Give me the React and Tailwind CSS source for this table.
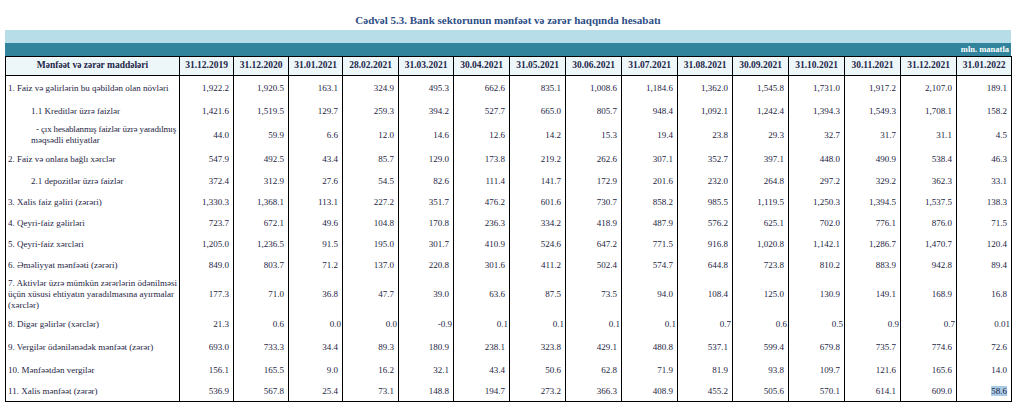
const dates = [
  '31.12.2019', '31.12.2020', '31.01.2021', '28.02.2021', '31.03.2021', '30.04.2021', '31.05.2021',
  '30.06.2021', '31.07.2021', '31.08.2021', '30.09.2021', '31.10.2021', '30.11.2021', '31.12.2021', '31.01.2022',
];

const colW = [
  'w-[54px]', 'w-[55px]', 'w-[54px]', 'w-[56px]', 'w-[55px]', 'w-[56px]', 'w-[56px]', 'w-[56px]',
  'w-[56px]', 'w-[55px]', 'w-[56px]', 'w-[56px]', 'w-[56px]', 'w-[56px]', 'w-[55px]',
];

const rows = [
  { label: '1. Faiz və gəlirlərin bu qəbildən olan növləri', h: 'h-[25px]', vals: ['1,922.2', '1,920.5', '163.1', '324.9', '495.3', '662.6', '835.1', '1,008.6', '1,184.6', '1,362.0', '1,545.8', '1,731.0', '1,917.2', '2,107.0', '189.1'] },
  { label: '1.1 Kreditlər üzrə faizlər', indent: true, h: 'h-[22px]', vals: ['1,421.6', '1,519.5', '129.7', '259.3', '394.2', '527.7', '665.0', '805.7', '948.4', '1,092.1', '1,242.4', '1,394.3', '1,549.3', '1,708.1', '158.2'] },
  { label: null, sub: true, h: 'h-[25px]', vals: ['44.0', '59.9', '6.6', '12.0', '14.6', '12.6', '14.2', '15.3', '19.4', '23.8', '29.3', '32.7', '31.7', '31.1', '4.5'] },
  { label: '2. Faiz və onlara bağlı xərclər', h: 'h-[23px]', vals: ['547.9', '492.5', '43.4', '85.7', '129.0', '173.8', '219.2', '262.6', '307.1', '352.7', '397.1', '448.0', '490.9', '538.4', '46.3'] },
  { label: '2.1 depozitlər üzrə faizlər', indent: true, h: 'h-[21px]', vals: ['372.4', '312.9', '27.6', '54.5', '82.6', '111.4', '141.7', '172.9', '201.6', '232.0', '264.8', '297.2', '329.2', '362.3', '33.1'] },
  { label: '3. Xalis faiz gəliri (zərəri)', h: 'h-[21px]', vals: ['1,330.3', '1,368.1', '113.1', '227.2', '351.7', '476.2', '601.6', '730.7', '858.2', '985.5', '1,119.5', '1,250.3', '1,394.5', '1,537.5', '138.3'] },
  { label: '4. Qeyri-faiz gəlirləri', h: 'h-[21px]', vals: ['723.7', '672.1', '49.6', '104.8', '170.8', '236.3', '334.2', '418.9', '487.9', '576.2', '625.1', '702.0', '776.1', '876.0', '71.5'] },
  { label: '5. Qeyri-faiz xərcləri', h: 'h-[21px]', vals: ['1,205.0', '1,236.5', '91.5', '195.0', '301.7', '410.9', '524.6', '647.2', '771.5', '916.8', '1,020.8', '1,142.1', '1,286.7', '1,470.7', '120.4'] },
  { label: '6. Əməliyyat mənfəəti (zərəri)', h: 'h-[21px]', vals: ['849.0', '803.7', '71.2', '137.0', '220.8', '301.6', '411.2', '502.4', '574.7', '644.8', '723.8', '810.2', '883.9', '942.8', '89.4'] },
  { label: '7. Aktivlər üzrə mümkün zərərlərin ödənilməsi üçün xüsusi ehtiyatın yaradılmasına ayırmalar (xərclər)', h: 'h-[37px]', vals: ['177.3', '71.0', '36.8', '47.7', '39.0', '63.6', '87.5', '73.5', '94.0', '108.4', '125.0', '130.9', '149.1', '168.9', '16.8'] },
  { label: '8. Digər gəlirlər (xərclər)', tight: true, h: 'h-[23px]', vals: ['21.3', '0.6', '0.0', '0.0', '-0.9', '0.1', '0.1', '0.1', '0.1', '0.7', '0.6', '0.5', '0.9', '0.7', '0.01'] },
  { label: '9. Vergilər ödənilənədək mənfəət (zərər)', h: 'h-[23px]', vals: ['693.0', '733.3', '34.4', '89.3', '180.9', '238.1', '323.8', '429.1', '480.8', '537.1', '599.4', '679.8', '735.7', '774.6', '72.6'] },
  { label: '10. Mənfəətdən vergilər', h: 'h-[23px]', vals: ['156.1', '165.5', '9.0', '16.2', '32.1', '43.4', '50.6', '62.8', '71.9', '81.9', '93.8', '109.7', '121.6', '165.6', '14.0'] },
  { label: '11. Xalis mənfəət (zərər)', last: true, h: 'h-[20px]', vals: ['536.9', '567.8', '25.4', '73.1', '148.8', '194.7', '273.2', '366.3', '408.9', '455.2', '505.6', '570.1', '614.1', '609.0', '58.6'] },
];

export default function App() {
  return (
    <div className="w-[1023px] h-[404px] bg-white font-['Liberation_Serif','DejaVu_Serif',serif] text-[#1d1d3f] overflow-hidden">
      <div className="pl-[5px] pt-[13px] w-[1011px]">
        <h1 className="text-center text-[11px] font-bold text-[#2d4e85] leading-[14px] h-[17px]">
          Cədvəl 5.3. Bank sektorunun mənfəət və zərər haqqında hesabatı
        </h1>
        <div className="h-[13px] bg-[#b7dde8]" />
        <div className="h-[13px] bg-[#31849b] flex items-center justify-end pr-[2px]">
          <span className="text-white font-bold text-[8.5px] leading-none">mln. manatla</span>
        </div>
        <table className="table-fixed border-collapse w-[1006px]">
          <colgroup>
            <col className="w-[174px]" />
            {colW.map((w, i) => <col key={i} className={w} />)}
          </colgroup>
          <thead>
            <tr className="h-[19px] bg-[#edf7fa]">
              <th className="border border-black text-[9.5px] font-bold text-center text-[#1d2647] p-0 leading-none">
                Mənfəət və zərər maddələri
              </th>
              {dates.map((d) => (
                <th key={d} className="border border-black text-[9.5px] font-bold text-center text-[#1d2647] p-0 leading-none">
                  {d}
                </th>
              ))}
            </tr>
          </thead>
          <tbody>
            {rows.map((r, ri) => (
              <tr key={ri} className={r.h}>
                <td className={`border-x border-black text-[9px] leading-[11px] align-middle py-0 ${r.last ? 'border-b' : ''} ${r.indent || r.sub ? 'pl-[25px]' : 'pl-[2px] pr-[2px]'}`}>
                  {r.sub ? (
                    <>
                      <span className="whitespace-nowrap pl-[5px] tracking-[-0.15px]">- çıx hesablanmış faizlər üzrə yaradılmış</span>
                      <br />
                      məqsədli ehtiyatlar
                    </>
                  ) : r.label}
                </td>
                {r.vals.map((v, vi) => (
                  <td key={vi} className={`border-x border-black text-[9px] leading-none text-right align-middle py-0 ${r.last ? 'border-b' : ''} ${r.tight && vi > 1 ? 'pr-[1px]' : 'pr-[4px]'}`}>
                    {r.last && vi === 14 ? <span className="bg-[#a9cbe6]">{v}</span> : v}
                  </td>
                ))}
              </tr>
            ))}
          </tbody>
        </table>
      </div>
    </div>
  );
}
